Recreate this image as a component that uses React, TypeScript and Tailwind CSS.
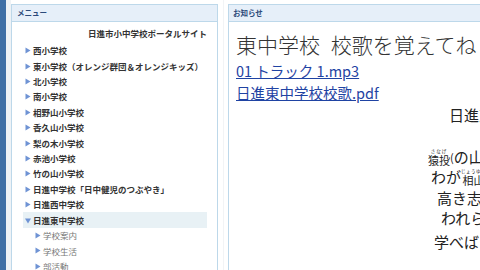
import React from "react";

const Tri = ({ down = false }: { down?: boolean }) => (
  <svg width="6" height="7" viewBox="0 0 6 7" className="shrink-0">
    {down ? (
      <polygon points="0,1.5 6,1.5 3,6.5" fill="#6f93d4" />
    ) : (
      <polygon points="0.5,0.5 5.5,3.5 0.5,6.5" fill="#6f93d4" />
    )}
  </svg>
);

const items = [
  "西小学校",
  "東小学校（オレンジ群団＆オレンジキッズ）",
  "北小学校",
  "南小学校",
  "相野山小学校",
  "香久山小学校",
  "梨の木小学校",
  "赤池小学校",
  "竹の山小学校",
  "日進中学校「日中健児のつぶやき」",
  "日進西中学校",
];

const subs = ["学校案内", "学校生活", "部活動", "行事"];

export default function App() {
  return (
    <div className="w-[480px] h-[270px] overflow-hidden flex bg-white font-['Noto_Sans_CJK_JP',sans-serif] text-[#333]">
      <div className="w-[6px] shrink-0 bg-[#3f6fa6]" />
      <div className="w-[5px] shrink-0 bg-[#eef2f6]" />
      <div className="w-[207px] shrink-0 pt-[4px] bg-white">
        <div className="h-[400px] border border-[#bdd8ea]">
          <div className="h-[17px] bg-[#e6eff9] border-b border-[#bdd8ea] flex items-center pl-[5px] text-[7.5px] font-bold text-[#2c4a7a] leading-none">
            メニュー
          </div>
          <div className="text-right pr-[10px] mt-[4px] h-[15.4px] leading-[15.4px] text-[8.5px] font-bold text-[#333]">
            日進市小中学校ポータルサイト
          </div>
          <div className="mt-[1.6px] ml-[11px] mr-[10px]">
            {items.map((t) => (
              <div key={t} className="h-[15.4px] flex items-center gap-[2px] pl-[2px] text-[8.5px] font-bold whitespace-nowrap">
                <Tri />
                <span>{t}</span>
              </div>
            ))}
            <div className="h-[15.6px] flex items-center gap-[2px] pl-[2px] text-[8.5px] font-bold bg-[#e8f1f5]">
              <Tri down />
              <span>日進東中学校</span>
            </div>
            {subs.map((t) => (
              <div key={t} className="h-[15.4px] flex items-center gap-[2px] pl-[12px] text-[8.5px] text-[#777]">
                <Tri />
                <span>{t}</span>
              </div>
            ))}
          </div>
        </div>
      </div>
      <div className="w-[10px] shrink-0 flex justify-center">
        <div className="w-px bg-[#f2f4f6]" />
      </div>
      <div className="w-[400px] shrink-0 pt-[4px]">
        <div className="h-[400px] border border-[#bdd8ea]">
          <div className="h-[17px] bg-[#e6eff9] border-b border-[#bdd8ea] flex items-center pl-[4px] text-[7.5px] font-bold text-[#2c4a7a] leading-none">
            お知らせ
          </div>
          <div className="pl-[7px]">
            <div className="mt-[9px] h-[26px] leading-[26px] text-[21px] font-light whitespace-nowrap text-[#333] [word-spacing:6px]">
              東中学校 校歌を覚えてね
            </div>
            <div className="mt-[3px] h-[22px] leading-[22px] text-[14.5px] whitespace-nowrap">
              <a href="#" className="text-[#1f43a3] underline">01 トラック 1.mp3</a>
            </div>
            <div className="h-[22px] leading-[22px] text-[14.5px] whitespace-nowrap">
              <a href="#" className="text-[#1f43a3] underline">日進東中学校校歌.pdf</a>
            </div>
            <div className="mt-[2px] ml-[213px] h-[18px] leading-[18px] text-[15px] whitespace-nowrap text-[#222]">
              日進東中学校校歌
            </div>
            <div className="mt-[20px] flex flex-col text-[#222] whitespace-nowrap">
              <div className="ml-[192px] h-[22px] flex items-end text-[15px] leading-[18px]">
                <span className="text-[11px] leading-[12px] flex flex-col items-center">
                  <span className="text-[4.5px] leading-[5px] tracking-[1px]">さなげ</span>
                  <span>猿投</span>
                </span>
                <span className="text-[11px]">(</span>
                <span>の山の 緑濃く</span>
              </div>
              <div className="ml-[195px] h-[20px] flex items-end text-[15px] leading-[18px]">
                <span>わが</span>
                <span className="text-[11px] leading-[12px] flex flex-col items-center">
                  <span className="text-[4.5px] leading-[5px] tracking-[0.5px]">じょうゆう</span>
                  <span>相山</span>
                </span>
                <span>に 風かおる</span>
              </div>
              <div className="ml-[201px] h-[21px] flex items-end text-[15px] leading-[18px]">
                高き志 胸に抱き
              </div>
              <div className="ml-[205px] h-[20px] flex items-end text-[15px] leading-[18px]">
                われら日進 東中
              </div>
              <div className="ml-[198px] h-[24px] flex items-end text-[15px] leading-[18px]">
                学べば 道は開かれん
              </div>
            </div>
          </div>
        </div>
      </div>
    </div>
  );
}
